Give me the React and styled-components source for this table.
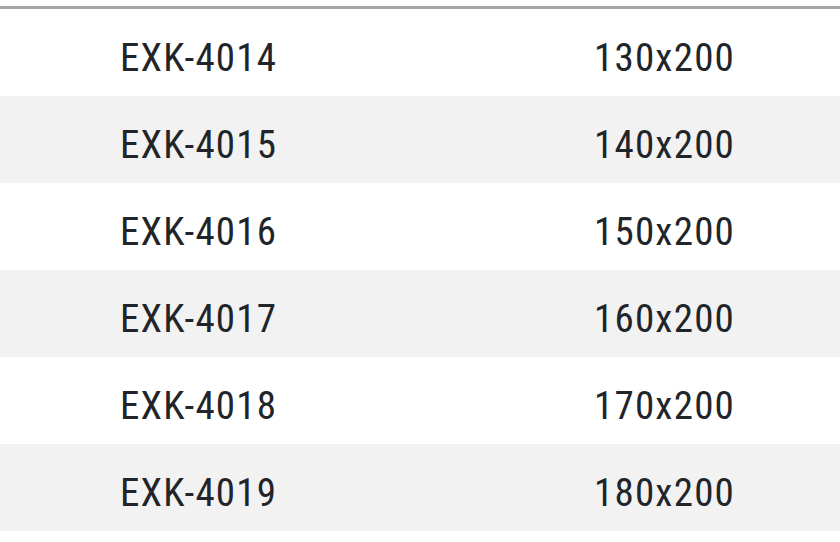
import React from 'react';
import styled, { createGlobalStyle } from 'styled-components';

const Global = createGlobalStyle`
  body {
    margin: 0;
    background: #fff;
    font-family: "Roboto Condensed", Roboto, sans-serif;
  }
`
const Wrap = styled.div`
  padding-top: 6px;
`
const Table = styled.div`
  border-top: 3px solid #a4a4a4;
`
const Row = styled.div`
  display: grid;
  grid-template-columns: 594px 1fr;
  height: 87px;
  box-sizing: border-box;
  padding-top: 12px;
  background: ${p => (p.$striped ? '#f2f2f2' : '#fff')};
`
const Cell = styled.div`
  font-size: 39px;
  line-height: 75px;
  letter-spacing: 1.2px;
  color: #212529;
  padding-left: ${p => (p.$first ? '120px' : '0')};
  white-space: nowrap;
`

const rows = [
  ['EXK-4014', '130x200'],
  ['EXK-4015', '140x200'],
  ['EXK-4016', '150x200'],
  ['EXK-4017', '160x200'],
  ['EXK-4018', '170x200'],
  ['EXK-4019', '180x200'],
]

export default function App() {
  return (
    <Wrap>
      <Global />
      <Table>
        {rows.map(([code, size], i) => (
          <Row key={code} $striped={i % 2 === 1}>
            <Cell $first>{code}</Cell>
            <Cell>{size}</Cell>
          </Row>
        ))}
      </Table>
    </Wrap>
  )
}
